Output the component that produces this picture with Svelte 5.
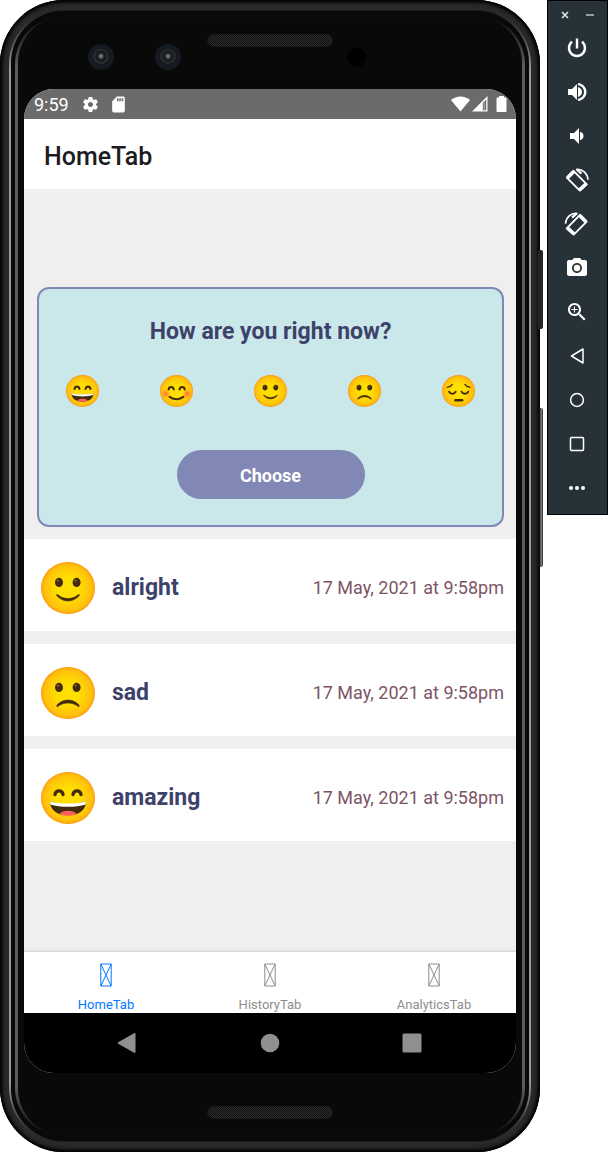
<script>
  const moods = [
    { id: 'amazing', label: 'amazing' },
    { id: 'good', label: 'good' },
    { id: 'alright', label: 'alright' },
    { id: 'sad', label: 'sad' },
    { id: 'down', label: 'down' }
  ];
  const entries = [
    { mood: 'alright', time: '17 May, 2021 at 9:58pm' },
    { mood: 'sad', time: '17 May, 2021 at 9:58pm' },
    { mood: 'amazing', time: '17 May, 2021 at 9:58pm' }
  ];
  const tabs = ['HomeTab', 'HistoryTab', 'AnalyticsTab'];
  let activeTab = $state('HomeTab');
  let selected = $state(null);

  const tools = [
    { name: 'Power', d: 'M13.200 2.500h-2.400v10h2.400V2.500zm4.630 2.370l-1.600 1.600C17.800 7.860 18.700 9.810 18.700 12c0 3.700-3 6.700-6.700 6.700s-6.700-3-6.700-6.700c0-2.190.9-4.140 2.470-5.530L6.170 4.870C4.100 6.600 2.800 9.260 2.800 12c0 5.100 4.100 9.200 9.200 9.200s9.200-4.100 9.200-9.200c0-2.740-1.300-5.400-3.370-7.130z' },
    { name: 'Volume up', d: 'M3 9v6h4l5 5V4L7 9H3zm14 3c0-2.300-1.500-4.300-4-5v10c2.500-.7 4-2.700 4-5zM13 3v2.300c3.600.5 6 3.340 6 6.700s-2.400 6.200-6 6.700V21c4.800-.5 8.500-4.300 8.500-9S17.800 3.500 13 3z' },
    { name: 'Volume down', d: 'M18.500 12c0-2-1-3.500-3.500-4.200v8.400c2.500-.7 3.500-2.200 3.500-4.200zM5 9v6h4l5 5V4L9 9H5z' },
    { name: 'Rotate left', kind: 'rotate-left' },
    { name: 'Rotate right', kind: 'rotate-right' },
    { name: 'Take screenshot', d: 'M12 8.800a3.200 3.200 0 1 0 0 6.400a3.200 3.200 0 1 0 0-6.400zM9 2L7.170 4H4c-1.100 0-2 .900-2 2v12c0 1.100.900 2 2 2h16c1.100 0 2-.900 2-2V6c0-1.100-.900-2-2-2h-3.170L15 2H9zm3 15c-2.760 0-5-2.240-5-5s2.240-5 5-5 5 2.240 5 5-2.240 5-5 5z' },
    { name: 'Zoom', d: 'M15.500 14h-.790l-.280-.270C15.410 12.590 16 11.110 16 9.500 16 5.910 13.090 3 9.500 3S3 5.910 3 9.500 5.910 16 9.500 16c1.610 0 3.090-.590 4.230-1.570l.270.280v.790l5 4.990L20.490 19l-4.990-5zm-6 0C7.010 14 5 11.990 5 9.500S7.010 5 9.500 5 14 7.010 14 9.500 11.990 14 9.500 14zM12.500 10H10v2.500H9V10H6.500V9H9V6.500h1V9h2.500v1z' },
    { name: 'Back', kind: 'back' },
    { name: 'Home', kind: 'home' },
    { name: 'Overview', kind: 'overview' },
    { name: 'More', kind: 'more' }
  ];
</script>

{#snippet face(mood)}
  <svg class="face" viewBox="0 0 54 52" role="img" aria-label={mood}>
    <defs>
      <radialGradient id="skin">
        <stop offset="0.4" stop-color="#ffdf00" />
        <stop offset="0.85" stop-color="#ffc30c" />
        <stop offset="0.96" stop-color="#ffae0b" />
        <stop offset="1" stop-color="#f78c08" />
      </radialGradient>
      <radialGradient id="blush">
        <stop offset="0.2" stop-color="#ff7043" stop-opacity="0.85" />
        <stop offset="1" stop-color="#ff7043" stop-opacity="0" />
      </radialGradient>
    </defs>
    <ellipse cx="27" cy="26" rx="27" ry="26" fill="url(#skin)" />
    {#if mood === 'alright' || mood === 'sad'}
      <ellipse cx="18" cy="20.400" rx="4" ry="4.600" fill="#422b0d" />
      <ellipse cx="35.600" cy="20.400" rx="4" ry="4.600" fill="#422b0d" />
      <circle cx="17" cy="18.600" r="1.200" fill="#7b5c2e" />
      <circle cx="34.600" cy="18.600" r="1.200" fill="#7b5c2e" />
    {/if}
    {#if mood === 'alright'}
      <path d="M15.500 33c0 .8 5 6 11.500 6s11.500-5.200 11.500-6c0-.8-1-.6-1.700 0-2.600 2.200-6 3.500-9.800 3.500s-7.200-1.300-9.800-3.500c-.7-.6-1.700-.8-1.700 0z" class="mouth" />
    {:else if mood === 'sad'}
      <path d="M15.700 39c0-1.200 4.600-6 11.300-6s11.300 4.800 11.300 6c0 .9-1 .6-1.700 0-2.600-1.900-6-3-9.600-3s-7 1.100-9.600 3c-.7.600-1.700.900-1.700 0z" class="mouth" />
    {:else if mood === 'amazing'}
      <path d="M14 22.500c1-4.800 7-4.800 8 0M32 22.500c1-4.800 7-4.800 8 0" class="stroke" stroke-width="3.400" />
      <path d="M9 29.500c0 7.500 6 13.800 18 13.800s18-6.300 18-13.800c-5 1.800-11 2.600-18 2.600s-13-.800-18-2.600z" fill="#422b0d" />
      <path d="M9 29.500c0 1 .2 2 .5 3 4.500 1.500 10.900 2.300 17.500 2.300s13-.8 17.500-2.300c.3-1 .5-2 .5-3-5 1.500-11 2-18 2s-13-.500-18-2z" fill="#fff" />
      <path d="M18.500 42c1.500-2.300 4.700-3.300 8.500-3.300s7 1 8.500 3.300c-2.500 1.100-5.300 1.500-8.500 1.500s-6-.400-8.500-1.500z" fill="#fb5c63" />
    {:else if mood === 'good'}
      <circle cx="9.500" cy="30.500" r="7" fill="url(#blush)" />
      <circle cx="44.500" cy="30.500" r="7" fill="url(#blush)" />
      <path d="M14 23.500c1-5.200 7.600-5.200 8.600 0M32 23.500c1-5.200 7.600-5.200 8.600 0" class="stroke" stroke-width="3.200" />
      <path d="M15.500 35.500c6 5.200 17 5.200 23 0" class="stroke" stroke-width="3.200" />
    {:else}
      <path d="M8.500 20c3.500-.3 6.600-1.800 8.500-4.800M46 20c-3.500-.3-6.600-1.800-8.500-4.800" class="stroke" stroke-width="2" />
      <path d="M11.500 27c2 4.600 9 4.600 11 0M32 27c2 4.600 9 4.600 11 0" class="stroke" stroke-width="3" />
      <path d="M22 41h11" class="stroke" stroke-width="4" />
    {/if}
  </svg>
{/snippet}

<div class="emulator">
  <div class="shell">
    <span class="key power"></span>
    <span class="key volume"></span>
    <div class="rim">
      <div class="groove">
        <div class="bevel">
          <div class="glass">
            <div class="forehead">
              <div class="lenses">
                <span class="lens"></span>
                <span class="lens"></span>
              </div>
              <span class="speaker"></span>
              <span class="sensor"></span>
            </div>

            <div class="screen">
              <div class="status">
                <span class="clock">9:59</span>
                <svg class="status-icon" viewBox="0 0 24 24" aria-hidden="true"><path d="M19.140 12.940c.040-.300.060-.610.060-.940 0-.320-.020-.640-.070-.940l2.030-1.580c.180-.140.230-.410.120-.610l-1.920-3.320c-.120-.220-.370-.290-.590-.220l-2.390.960c-.500-.380-1.030-.700-1.620-.940l-.360-2.540c-.040-.240-.240-.410-.480-.410h-3.840c-.240 0-.430.170-.470.410l-.360 2.540c-.590.240-1.130.570-1.620.940l-2.390-.960c-.220-.080-.470 0-.590.220L2.740 8.870c-.120.210-.080.470.120.610l2.030 1.580c-.050.300-.090.630-.090.940s.020.640.070.940l-2.030 1.580c-.180.140-.230.410-.120.610l1.920 3.320c.120.220.370.290.590.220l2.390-.960c.500.380 1.030.700 1.620.940l.360 2.540c.050.240.240.410.480.410h3.840c.240 0 .440-.170.470-.410l.360-2.540c.590-.240 1.130-.560 1.620-.940l2.390.960c.220.080.470 0 .590-.220l1.920-3.320c.120-.220.070-.470-.120-.610l-2.010-1.580zM12 15.200c-1.760 0-3.200-1.440-3.200-3.200s1.440-3.200 3.200-3.200 3.200 1.440 3.200 3.200-1.440 3.200-3.200 3.200z" /></svg>
                <svg class="status-icon" viewBox="0 0 24 24" aria-hidden="true"><path d="M18 2h-8L4.020 8 4 20c0 1.100.900 2 2 2h12c1.100 0 2-.900 2-2V4c0-1.100-.900-2-2-2zm-6 6h-2V4h2v4zm3 0h-2V4h2v4zm3 0h-2V4h2v4z" /></svg>
                <svg class="signals" viewBox="0 0 56 18" aria-hidden="true">
                  <path d="M0 5C5.500.300 13.500.300 19 5L9.500 16.500z" />
                  <path d="M36.500 1v15.500H21z" />
                  <path d="M31.800 8l3.400-3.500v10.700h-3.400z" fill="#6b6b6b" />
                  <path d="M32.800 7.500h1v8h-1z" fill="#b5b5b5" />
                  <path d="M48 1h5v1.500h1.500q1 0 1 1V16q0 1-1 1h-8q-1 0-1-1V3.500q0-1 1-1H48z" />
                </svg>
              </div>

              <header><h1>HomeTab</h1></header>

              <main>
                <section class="card">
                  <h2>How are you right now?</h2>
                  <div class="moods">
                    {#each moods as mood}
                      <button class="mood" aria-pressed={selected === mood.id} aria-label={mood.label} onclick={() => (selected = mood.id)}>
                        {@render face(mood.id)}
                      </button>
                    {/each}
                  </div>
                  <button class="choose">Choose</button>
                </section>
                <ul class="entries">
                  {#each entries as entry}
                    <li>
                      <span class="entry-face">{@render face(entry.mood)}</span>
                      <strong>{entry.mood}</strong>
                      <time>{entry.time}</time>
                    </li>
                  {/each}
                </ul>
              </main>

              <nav class="tabs">
                {#each tabs as tab}
                  <button class:active={activeTab === tab} onclick={() => (activeTab = tab)}>
                    <svg viewBox="0 0 12 24" aria-hidden="true"><path d="M.800 1h10.400v22H.800zL11.200 23M11.200 1L.800 23" /></svg>
                    <span>{tab}</span>
                  </button>
                {/each}
              </nav>

              <div class="system">
                <button aria-label="Back"><svg viewBox="0 0 20 20"><path d="M17.500 0q1 0 1 1v18q0 1-1 1L1.200 10.800q-1-.8 0-1.600z" /></svg></button>
                <button aria-label="Home"><svg viewBox="0 0 20 20"><circle cx="10" cy="10" r="9.300" /></svg></button>
                <button aria-label="Recent apps"><svg viewBox="0 0 20 20"><rect x="0.500" y="0.500" width="19" height="19" rx="1.500" /></svg></button>
              </div>
            </div>

            <div class="chin"><span class="speaker"></span></div>
          </div>
        </div>
      </div>
    </div>
  </div>

  <aside class="toolbar">
    <div class="window">
      <button aria-label="Close"><svg viewBox="0 0 8 8"><path d="M1 1l6 6M7 1L1 7" stroke="#e8eaeb" stroke-width="1.500" /></svg></button>
      <button aria-label="Minimize"><svg viewBox="0 0 8 8"><path d="M0 4h8" stroke="#a3a8ab" stroke-width="1.800" /></svg></button>
    </div>
    {#each tools as tool}
      <button class="tool" aria-label={tool.name}>
        <svg viewBox="0 0 24 24">
          {#if tool.d}
            <path d={tool.d} fill="#fff" />
          {:else if tool.kind === 'rotate-left' || tool.kind === 'rotate-right'}
            <g transform={tool.kind === 'rotate-right' ? 'translate(23.500 0) scale(-1 1)' : undefined} fill="none" stroke="#fff">
              <path d="M8.500 2.800L21.800 16.300L14.800 22.600L1.800 9.700z" stroke-width="1.900" stroke-linejoin="round" />
              <path d="M2.600 9.800L8.800 3.600M14.700 21.800l6.400-6" stroke-width="3.600" />
              <path d="M11 1.600c6.500-1 11.500 3.500 12 10" stroke-width="1.700" />
              <path d="M12 1.600l4.500 4" stroke-width="2.200" />
            </g>
          {:else if tool.kind === 'back'}
            <path d="M18 5v14L6.500 12z" class="outline" />
          {:else if tool.kind === 'home'}
            <circle cx="12" cy="12" r="6.400" class="outline" />
          {:else if tool.kind === 'overview'}
            <rect x="5.500" y="5.500" width="13" height="13" rx="1" class="outline" />
          {:else}
            <g fill="#fff"><circle cx="6" cy="12" r="2" /><circle cx="12" cy="12" r="2" /><circle cx="18" cy="12" r="2" /></g>
          {/if}
        </svg>
      </button>
    {/each}
  </aside>
</div>

<style>
  :global(body) {
    margin: 0;
    background: #fff;
  }
  .emulator {
    display: flex;
    align-items: flex-start;
    gap: 7px;
    min-height: 100vh;
    font-family: Roboto, sans-serif;
  }
  .emulator * {
    box-sizing: border-box;
  }
  button {
    margin: 0;
    padding: 0;
    border: 0;
    background: none;
    font: inherit;
    color: inherit;
    cursor: pointer;
  }
  svg {
    display: block;
  }
  h1, h2, ul {
    margin: 0;
    padding: 0;
  }

  /* Device body */
  .shell, .rim, .groove, .bevel, .glass, .screen {
    display: flex;
    flex-direction: column;
    flex: 1;
    min-width: 0;
  }
  .shell {
    position: relative;
    min-height: 100vh;
    padding: 10px 9px;
    border-radius: 64px;
    background: #2b2b2b;
    box-shadow: inset 0 0 2px 2px #050505, inset 0 0 5px 3px #111;
  }
  .rim {
    padding: 1px 2px;
    border-radius: 54px;
    background: linear-gradient(#1b1b1b, #999 60px, #999 calc(100% - 60px), #1b1b1b);
  }
  .groove {
    padding: 5px 4px;
    border-radius: 52px;
    background: #090909;
  }
  .bevel {
    padding: 1px 3px;
    border-radius: 48px;
    background: linear-gradient(#090909, #5b5a62 50px, #5b5a62 calc(100% - 50px), #090909);
  }
  .glass {
    padding: 0 6px;
    border-radius: 46px;
    background: #090909;
  }
  .key {
    position: absolute;
    right: -3px;
    width: 5px;
    border-radius: 0 2px 2px 0;
    background: #252525;
  }
  .power {
    top: 250px;
    height: 79px;
  }
  .volume {
    top: 408px;
    height: 159px;
    background: linear-gradient(90deg, #111 40%, #999 60%, #222);
  }
  .forehead {
    display: grid;
    grid-template-columns: 1fr auto 1fr;
    align-items: end;
    height: 72px;
    padding-bottom: 19px;
  }
  .lenses {
    display: flex;
    gap: 41px;
    padding-left: 64px;
  }
  .lens {
    width: 26px;
    height: 26px;
    border: 5px solid #151b20;
    border-radius: 50%;
    background: radial-gradient(circle at 50% 45%, #777 0 1px, #24262d 3px, #15161a 5px, #33353a 7px, #17191c 8px);
  }
  .speaker {
    width: 126px;
    height: 13px;
    border: 1px solid #191919;
    border-radius: 7px;
    background: repeating-conic-gradient(#131313 0 25%, #2a2a2a 0 50%) 0 0 / 2px 2px;
  }
  .forehead .speaker {
    align-self: start;
    margin-top: 17px;
  }
  .sensor {
    width: 19px;
    height: 19px;
    margin: 0 0 3px 14px;
    border-radius: 50%;
    background: #000;
  }
  .chin {
    display: flex;
    justify-content: center;
    height: 62px;
    padding-top: 33px;
  }

  /* Android screen */
  .screen {
    overflow: hidden;
    border-radius: 30px;
    background: #efefef;
  }
  .status {
    display: flex;
    align-items: center;
    gap: 9px;
    height: 30px;
    padding: 0 9px 0 10px;
    background: #6b6b6b;
    color: #fff;
    font-size: 18px;
    fill: #fff;
  }
  .clock {
    margin-right: 3px;
  }
  .status-icon {
    width: 19px;
    height: 19px;
  }
  .signals {
    width: 56px;
    height: 18px;
    margin-left: auto;
  }
  header {
    display: flex;
    align-items: center;
    height: 70px;
    padding: 5px 20px 0;
    background: #fff;
  }
  h1 {
    color: #1c1c1e;
    font-size: 25px;
    font-weight: 500;
    line-height: 32px;
  }
  main {
    flex: 1;
    padding-top: 98px;
  }
  .card {
    display: flex;
    flex-direction: column;
    align-items: center;
    margin: 0 12px 12px 13px;
    padding: 28px 27px 26px;
    border: 2px solid #8188b6;
    border-radius: 12px;
    background: #cae7e9;
  }
  h2 {
    color: #3d426b;
    font-size: 23px;
    font-weight: 700;
    line-height: 30px;
  }
  .moods {
    display: flex;
    justify-content: space-between;
    align-self: stretch;
    margin: 28px 0 43px;
  }
  .face {
    width: 100%;
    height: 100%;
  }
  .mouth {
    fill: #422b0d;
    stroke: #422b0d;
    stroke-width: 0.6;
  }
  .stroke {
    fill: none;
    stroke: #422b0d;
    stroke-linecap: round;
  }
  .mood {
    width: 33px;
    height: 32px;
  }
  .choose {
    width: 188px;
    padding: 13px 0 11px;
    border-radius: 25px;
    background: #8188b6;
    color: #fff;
    font-size: 18px;
    font-weight: 700;
    line-height: 25px;
  }
  .entries {
    display: flex;
    flex-direction: column;
    gap: 13px;
    list-style: none;
  }
  .entries li {
    display: flex;
    align-items: center;
    padding: 21px 12px 17px 17px;
    background: #fff;
  }
  .entry-face {
    width: 54px;
    height: 54px;
    padding-top: 2px;
    margin-right: 17px;
  }
  strong {
    flex: 1;
    color: #3d426b;
    font-size: 23px;
    font-weight: 700;
  }
  time {
    color: #7d5467;
    font-size: 18px;
  }
  .tabs {
    display: flex;
    border-top: 1px solid #d8d8d8;
    background: #fff;
    box-shadow: 0 -1px 2px #e3e3e3;
  }
  .tabs button {
    display: flex;
    flex: 1;
    flex-direction: column;
    align-items: center;
    gap: 9px;
    padding-top: 11px;
    color: #8e8e8f;
    font-size: 13px;
    line-height: 17px;
  }
  .tabs .active {
    color: #007aff;
  }
  .tabs svg {
    width: 12px;
    height: 24px;
    fill: none;
    stroke: currentColor;
  }
  .system {
    display: flex;
    align-items: center;
    justify-content: space-between;
    height: 60px;
    padding: 0 94px 0 93px;
    background: #000;
  }
  .system svg {
    width: 20px;
    height: 20px;
    fill: #909090;
  }

  /* Emulator controls */
  .toolbar {
    flex: none;
    width: 61px;
    padding-bottom: 4px;
    border: 1px solid #000;
    background: #273238;
  }
  .window {
    display: flex;
    justify-content: center;
    gap: 17px;
    height: 25px;
    padding: 10px 0 0;
  }
  .window svg {
    width: 8px;
    height: 8px;
  }
  .window button {
    height: 8px;
  }
  .tool {
    display: flex;
    align-items: center;
    justify-content: center;
    width: 100%;
    height: 44px;
    padding-right: 1px;
  }
  .tool svg {
    width: 24px;
    height: 24px;
    overflow: visible;
  }
  .outline {
    fill: none;
    stroke: #fff;
    stroke-width: 1.5;
    stroke-linejoin: round;
  }
</style>
